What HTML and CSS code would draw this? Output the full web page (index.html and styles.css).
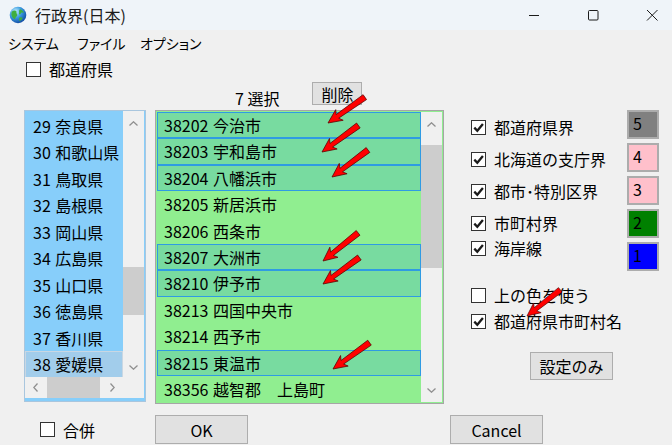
FILE: index.html
```html
<!DOCTYPE html>
<html lang="ja">
<head>
  <meta charset="UTF-8">
  <title>行政界(日本)</title>
  <link rel="stylesheet" href="styles.css">
</head>
<body>
  <div class="window">
    <div class="titlebar">
      <svg class="app-icon" viewBox="0 0 18 18">
        <defs>
          <radialGradient id="globe" cx="0.35" cy="0.3" r="0.8">
            <stop offset="0" stop-color="#c8f2ff"/>
            <stop offset="0.45" stop-color="#3a9be0"/>
            <stop offset="1" stop-color="#0a3f9a"/>
          </radialGradient>
        </defs>
        <circle cx="9" cy="9" r="8.3" fill="url(#globe)"/>
        <path d="M3 5.5c1.5-1.2 3.2-1.5 4.2-.6.8.8-.2 1.8.6 2.8.9 1 .4 2.5-.6 3.1-.8.5-.6 2-1.4 2.5C4.2 12.5 2.6 10.5 2.4 8.4 2.3 7.2 2.5 6.2 3 5.5z" fill="#3fae3f"/>
        <path d="M11 3.2c1.6.4 3.3 1.7 3.9 3.4-.9.3-1.6-.4-2.4 0-.9.4-.5 1.6-1.5 1.8-.9.2-1.2-.8-.9-1.6.3-.9-.4-1.6.1-2.4.2-.5.5-.9.8-1.2z" fill="#3fae3f"/>
        <path d="M10.5 11.5c1-.6 2.4-.3 3.2.5-.6 1.5-1.8 2.6-3.3 3.1-.4-.9-.6-2.7.1-3.6z" fill="#3fae3f"/>
      </svg>
      <span class="title">行政界(日本)</span>
      <div class="caption-buttons">
        <svg class="cap" viewBox="0 0 12 12"><path d="M1 6.5h10" stroke="#1b1b1b" stroke-width="1"/></svg>
        <svg class="cap" viewBox="0 0 12 12"><rect x="1.5" y="1.5" width="9.5" height="9.5" rx="1" fill="none" stroke="#1b1b1b" stroke-width="1"/></svg>
        <svg class="cap" viewBox="0 0 12 12"><path d="M1 1l10.5 10.5M11.5 1L1 11.5" stroke="#1b1b1b" stroke-width="1"/></svg>
      </div>
    </div>

    <div class="menubar">
      <span class="menu-item">システム</span>
      <span class="menu-item">ファイル</span>
      <span class="menu-item">オプション</span>
    </div>

    <div class="top-check">
      <label class="check"><span class="box"></span>都道府県</label>
    </div>

    <div class="main">
      <!-- 選択数と削除 -->
      <div class="mid-head">
        <span class="count">7 選択</span>
        <button class="btn btn-del">削除</button>
      </div>

      <!-- 都道府県リスト -->
      <div class="list-pref">
        <div class="pref-items">
          <div class="row">29 奈良県</div>
          <div class="row">30 和歌山県</div>
          <div class="row">31 鳥取県</div>
          <div class="row">32 島根県</div>
          <div class="row">33 岡山県</div>
          <div class="row">34 広島県</div>
          <div class="row">35 山口県</div>
          <div class="row">36 徳島県</div>
          <div class="row">37 香川県</div>
          <div class="row focus">38 愛媛県</div>
        </div>
        <div class="vscroll">
          <div class="arrow arrow-up"><svg viewBox="0 0 9 5"><polyline points="0.5,4.5 4.5,0.8 8.5,4.5"/></svg></div>
          <div class="track"><div class="thumb pref-thumb"></div></div>
          <div class="arrow arrow-down"><svg viewBox="0 0 9 5"><polyline points="0.5,0.5 4.5,4.2 8.5,0.5"/></svg></div>
        </div>
        <div class="hscroll">
          <div class="harrow"><svg viewBox="0 0 5 9"><polyline points="4.5,0.5 0.8,4.5 4.5,8.5"/></svg></div>
          <div class="hthumb"></div>
          <div class="htrack"></div>
          <div class="harrow"><svg viewBox="0 0 5 9"><polyline points="0.5,0.5 4.2,4.5 0.5,8.5"/></svg></div>
        </div>
        <div class="corner"></div>
      </div>

      <!-- 市町村リスト -->
      <div class="list-city">
        <div class="city-items">
          <div class="row sel">38202 今治市</div>
          <div class="row sel">38203 宇和島市</div>
          <div class="row sel">38204 八幡浜市</div>
          <div class="row">38205 新居浜市</div>
          <div class="row">38206 西条市</div>
          <div class="row sel">38207 大洲市</div>
          <div class="row sel">38210 伊予市</div>
          <div class="row">38213 四国中央市</div>
          <div class="row">38214 西予市</div>
          <div class="row sel">38215 東温市</div>
          <div class="row">38356 越智郡　上島町</div>
        </div>
        <div class="vscroll">
          <div class="arrow arrow-up"><svg viewBox="0 0 9 5"><polyline points="0.5,4.5 4.5,0.8 8.5,4.5"/></svg></div>
          <div class="track"><div class="thumb city-thumb"></div></div>
          <div class="arrow arrow-down"><svg viewBox="0 0 9 5"><polyline points="0.5,0.5 4.5,4.2 8.5,0.5"/></svg></div>
        </div>
      </div>

      <!-- 表示オプション -->
      <div class="options">
        <div class="opt-checks">
          <label class="check opt"><span class="box on"><svg viewBox="0 0 13 13"><path d="M2.3 6.6l3 3.1 5.6-6.8"/></svg></span>都道府県界</label>
          <label class="check opt"><span class="box on"><svg viewBox="0 0 13 13"><path d="M2.3 6.6l3 3.1 5.6-6.8"/></svg></span>北海道の支庁界</label>
          <label class="check opt"><span class="box on"><svg viewBox="0 0 13 13"><path d="M2.3 6.6l3 3.1 5.6-6.8"/></svg></span>都市･特別区界</label>
          <label class="check opt"><span class="box on"><svg viewBox="0 0 13 13"><path d="M2.3 6.6l3 3.1 5.6-6.8"/></svg></span>市町村界</label>
          <label class="check opt tight"><span class="box on"><svg viewBox="0 0 13 13"><path d="M2.3 6.6l3 3.1 5.6-6.8"/></svg></span>海岸線</label>
          <label class="check opt spaced"><span class="box"></span>上の色を使う</label>
          <label class="check opt flush"><span class="box on"><svg viewBox="0 0 13 13"><path d="M2.3 6.6l3 3.1 5.6-6.8"/></svg></span>都道府県市町村名</label>
          <button class="btn btn-set">設定のみ</button>
        </div>
        <div class="swatches">
          <div class="swatch" style="background:#808080">5</div>
          <div class="swatch" style="background:#ffc0cb">4</div>
          <div class="swatch" style="background:#ffc0cb">3</div>
          <div class="swatch" style="background:#008000">2</div>
          <div class="swatch" style="background:#0000ff">1</div>
        </div>
      </div>
    </div>

    <div class="footer">
      <label class="check merge"><span class="box"></span>合併</label>
      <button class="btn btn-ok">OK</button>
      <button class="btn btn-cancel">Cancel</button>
    </div>

    <!-- 注記の矢印 -->
    <svg class="arrows" viewBox="0 0 672 445" width="672" height="445">
      <defs>
        <polygon id="arrow" points="0,0 -14,-6.5 -11.5,-2.2 -45,-3 -45,3 -11.5,2.2 -14,6.5" fill="#ff0000" stroke="#5a0000" stroke-width="0.7" stroke-linejoin="round"/>
      </defs>
      <use href="#arrow" transform="translate(328 123) rotate(144.9)"/>
      <use href="#arrow" transform="translate(322 152) rotate(143.9)"/>
      <use href="#arrow" transform="translate(332 177) rotate(143.1)"/>
      <use href="#arrow" transform="translate(323 261) rotate(141.3)"/>
      <use href="#arrow" transform="translate(323 284) rotate(143.9)"/>
      <use href="#arrow" transform="translate(333 369) rotate(144.2)"/>
      <use href="#arrow" transform="translate(527 316) rotate(141.8) scale(0.94)"/>
    </svg>
  </div>
</body>
</html>
```

FILE: styles.css
```css
* {
  box-sizing: border-box;
}

body {
  margin: 0;
  font-family: "Noto Sans CJK JP", "Noto Sans", sans-serif;
  font-size: 16px;
  color: #000;
  background-color: #f0f0f0;
}

.window {
  position: relative;
  width: 672px;
  height: 445px;
  overflow: hidden;
  background-color: #f0f0f0;
}

/* タイトルバー */
.titlebar {
  height: 30px;
  display: flex;
  align-items: center;
  background-color: #eff4f9;
}

.app-icon {
  width: 18px;
  height: 18px;
  margin-left: 9px;
  margin-right: 8px;
}

.title {
  font-size: 16px;
  line-height: 30px;
  color: #1b1b1b;
}

.caption-buttons {
  margin-left: auto;
  display: flex;
  gap: 47px;
  padding-right: 14px;
}

.cap {
  width: 12px;
  height: 12px;
}

/* メニュー */
.menubar {
  height: 26px;
  display: flex;
  align-items: center;
  padding-left: 8px;
  font-size: 14px;
  font-feature-settings: "palt";
}

.menu-item:nth-child(1) {
  width: 69px;
}

.menu-item:nth-child(2) {
  width: 63px;
}

.top-check {
  height: 26px;
  display: flex;
  align-items: center;
  padding-left: 26px;
}

.check {
  display: flex;
  align-items: center;
  gap: 8px;
  line-height: 20px;
}

.box {
  width: 15px;
  height: 15px;
  border: 1px solid #333;
  background-color: #fff;
  display: flex;
  align-items: center;
  justify-content: center;
}

.box svg {
  width: 13px;
  height: 13px;
}

.box path {
  fill: none;
  stroke: #1a1a1a;
  stroke-width: 2.3;
}

.btn {
  font-family: inherit;
  font-size: 16px;
  color: #000;
  background-color: #e1e1e1;
  border: 1px solid #adadad;
  padding: 0;
  line-height: 1;
}

/* メイン */
.main {
  display: grid;
  grid-template-columns: 122px 289px 1fr;
  grid-template-rows: 28px 294px;
  column-gap: 9px;
  margin-left: 24px;
  margin-right: 13px;
}

.mid-head {
  grid-column: 2;
  grid-row: 1;
  display: flex;
  align-items: flex-start;
}

.count {
  margin-left: 80px;
  margin-top: 6px;
  line-height: 20px;
}

.btn-del {
  width: 50px;
  height: 23px;
  margin-left: 33px;
}

.row {
  white-space: nowrap;
  line-height: 26px;
  word-spacing: 1px;
}

/* 都道府県リスト */
.list-pref {
  grid-column: 1;
  grid-row: 2;
  height: 292px;
  display: grid;
  grid-template-columns: 1fr 21px;
  grid-template-rows: 1fr 21px;
  border: 1px solid #a9c6de;
  padding: 0 1px 3px 0;
  background-color: #87cefa;
}

.pref-items {
  overflow: hidden;
  padding-top: 1.75px;
}

.pref-items .row {
  height: 26.5px;
  line-height: 26.5px;
  padding-left: 8px;
}

.pref-items .focus {
  background-color: #a2cdeb;
  border: 1px solid #c9d7e3;
  padding-left: 7px;
  line-height: 24.5px;
}

.vscroll {
  display: flex;
  flex-direction: column;
  background-color: #f0f0f0;
}

.arrow {
  height: 33px;
  display: flex;
  justify-content: center;
}

.arrow-up {
  align-items: flex-start;
  padding-top: 10px;
}

.arrow-down {
  align-items: flex-end;
  padding-bottom: 7px;
}

.arrow svg {
  width: 9px;
  height: 5px;
}

.arrow polyline,
.harrow polyline {
  fill: none;
  stroke: #8f8f8f;
  stroke-width: 1.3;
}

.track {
  flex: 1;
}

.thumb {
  background-color: #cdcdcd;
}

.pref-thumb {
  margin-top: 123px;
  height: 48px;
}

.city-thumb {
  height: 123px;
}

.hscroll {
  display: flex;
  background-color: #f0f0f0;
}

.harrow {
  width: 21px;
  display: flex;
  align-items: center;
  justify-content: center;
}

.harrow svg {
  width: 5px;
  height: 9px;
}

.hthumb {
  width: 53px;
  margin-left: 1px;
  background-color: #cdcdcd;
}

.htrack {
  flex: 1;
}

.corner {
  background-color: #f0f0f0;
}

/* 市町村リスト */
.list-city {
  grid-column: 2;
  grid-row: 2;
  display: flex;
  border: 1px solid #a6a6a6;
  padding: 1px;
  background-color: #90ee90;
}

.city-items {
  flex: 1;
  overflow: hidden;
}

.city-items .row {
  height: 26.4px;
  line-height: 26.4px;
  padding-left: 7px;
}

.city-items .sel {
  background-color: #78dba0;
  border: 1px solid #2f9be3;
  padding-left: 6px;
  line-height: 24.4px;
}

.list-city .vscroll {
  width: 21px;
}

.list-city .arrow-down {
  padding-bottom: 9px;
}

/* オプション */
.options {
  grid-column: 3;
  grid-row: 2;
  display: grid;
  grid-template-columns: 1fr 32px;
  padding-left: 18px;
}

.opt-checks {
  display: flex;
  flex-direction: column;
  align-items: flex-start;
  padding-top: 4px;
}

.opt {
  height: 26px;
  margin-bottom: 6px;
  white-space: nowrap;
}

.opt.tight {
  margin-top: -7px;
}

.opt.spaced {
  margin-top: 15px;
  margin-bottom: 0;
}

.opt.flush {
  margin-bottom: 0;
}

.btn-set {
  width: 83px;
  height: 28px;
  margin-left: 59px;
  margin-top: 18px;
}

.swatches {
  display: flex;
  flex-direction: column;
  gap: 4px;
}

.swatch {
  height: 29px;
  border: 2px solid #acacac;
  padding-left: 4px;
  padding-top: 1px;
  line-height: 20px;
}

/* 下部 */
.footer {
  display: flex;
  align-items: center;
  height: 29px;
  margin-top: 11px;
  padding-left: 40px;
}

.merge {
  width: 115px;
}

.btn-ok,
.btn-cancel {
  width: 93px;
  height: 29px;
}

.btn-cancel {
  margin-left: 202px;
}

.arrows {
  position: absolute;
  top: 0;
  left: 0;
  pointer-events: none;
}
```
